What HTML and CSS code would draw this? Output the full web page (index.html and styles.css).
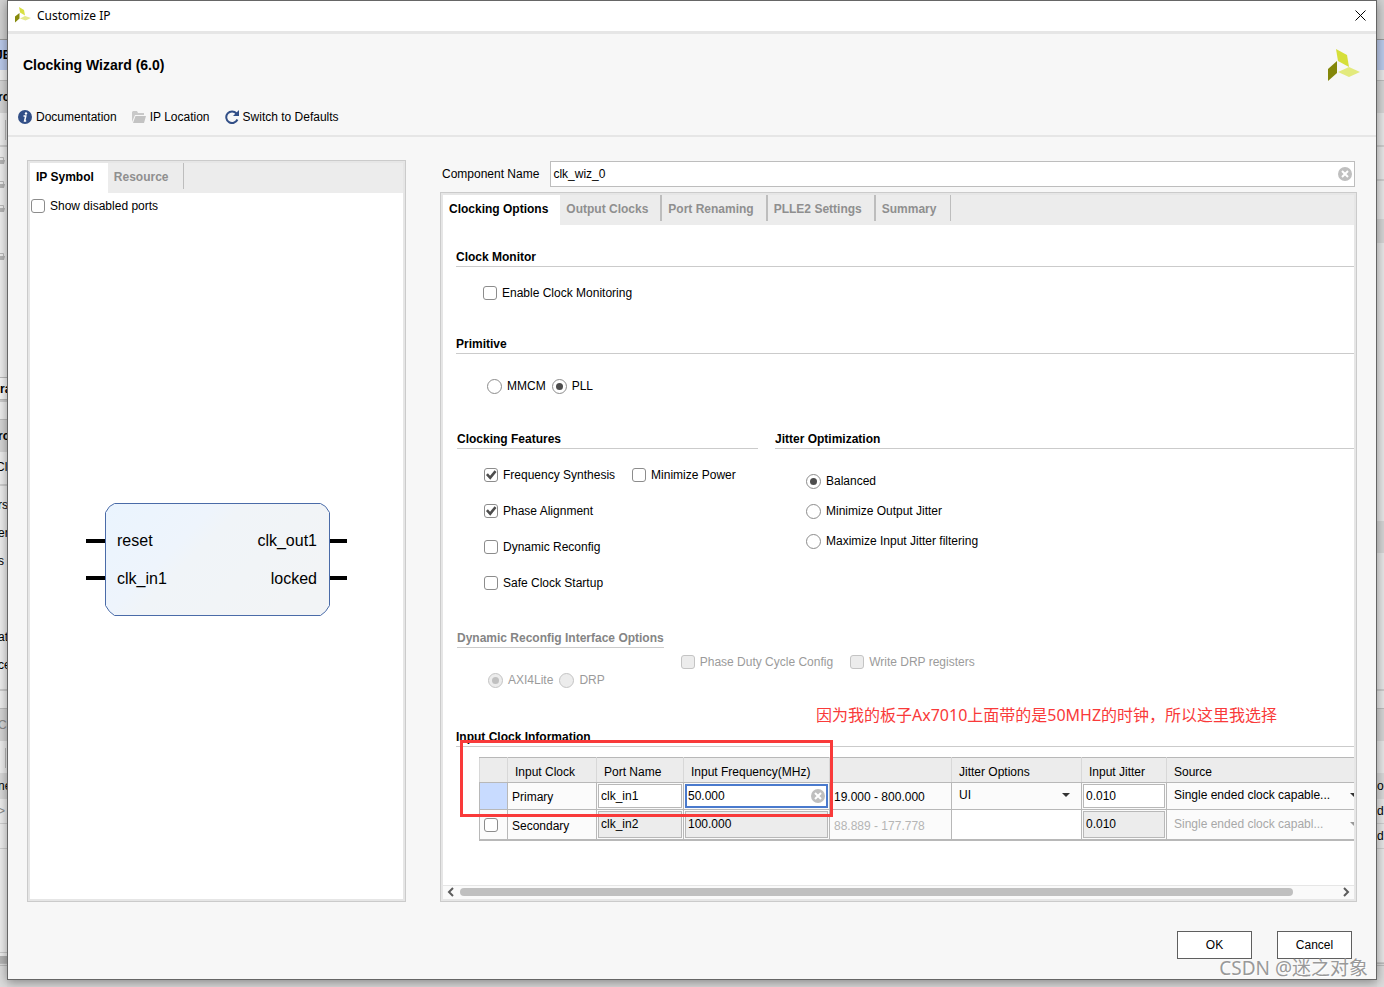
FILE: index.html
```html
<!DOCTYPE html>
<html lang="en">
<head>
    <meta charset="UTF-8">
    <meta name="viewport" content="width=device-width, initial-scale=1.0">
    <title>Customize IP</title>
    <link rel="stylesheet" href="styles.css">
</head>
<body>

<div class="desktop">
    <!-- main window, left edge -->
    <div class="edge left">
        <div class="edge-menu"></div>
        <div class="edge-banner"><b>JE</b></div>
        <div class="edge-gap"></div>
        <div class="edge-title"><b>rc</b></div>
        <div class="edge-tools"><i></i></div>
        <div class="edge-files">
            <svg width="5" height="8" viewBox="0 0 5 8"><path d="M0 1.500h3.500V4" fill="none" stroke="#bbb"/><path d="M0 4h5l-1 4H0z" fill="#b5b5b5"/></svg>
            <svg width="5" height="8" viewBox="0 0 5 8"><path d="M0 1.500h3.500V4" fill="none" stroke="#bbb"/><path d="M0 4h5l-1 4H0z" fill="#b5b5b5"/></svg>
            <svg width="5" height="8" viewBox="0 0 5 8"><path d="M0 1.500h3.500V4" fill="none" stroke="#bbb"/><path d="M0 4h5l-1 4H0z" fill="#b5b5b5"/></svg>
            <svg class="skip" width="5" height="8" viewBox="0 0 5 8"><path d="M0 1.500h3.500V4" fill="none" stroke="#bbb"/><path d="M0 4h5l-1 4H0z" fill="#b5b5b5"/></svg>
        </div>
        <div class="edge-tab"><b>ra</b></div>
        <div class="edge-split"></div>
        <div class="edge-title"><b>rc</b></div>
        <div class="edge-tools">Clo</div>
        <div class="edge-props">
            <span>rs</span>
            <span>er</span>
            <span>s</span>
            <span class="skip">at</span>
            <span>ce</span>
        </div>
        <div class="edge-split"></div>
        <div class="edge-title muted">Co</div>
        <div class="edge-tools plain"><i></i></div>
        <div class="edge-head">ne</div>
        <div class="edge-row muted">&gt;</div>
        <div class="edge-row"></div>
        <div class="edge-rest"></div>
        <div class="edge-scroll"></div>
        <div class="edge-status"></div>
    </div>

    <main class="dialog">
        <header class="titlebar">
            <svg class="title-icon" width="16" height="16" viewBox="0 0 32 32">
                <path d="M8 0l10 6 2 11-10-6z" fill="#d8e043"/>
                <path d="M0 19l9-7v11l-9 8z" fill="#878a0b"/>
                <path d="M10 23l10-5 12 4-11 5z" fill="#e4e98a"/>
            </svg>
            <span class="title-text">Customize IP</span>
            <button class="close" aria-label="Close">
                <svg width="11" height="11" viewBox="0 0 11 11"><path d="M.5.5l10 10M10.500.5l-10 10" stroke="#000" fill="none"/></svg>
            </button>
        </header>

        <section class="ip-header">
            <div class="ip-name">
                <h1>Clocking Wizard (6.0)</h1>
                <svg width="32" height="32" viewBox="0 0 32 32">
                    <path d="M8 0l11 6 2 12-11-6z" fill="#d6df3a"/>
                    <path d="M0 20l9-8v12l-9 8z" fill="#84870a"/>
                    <path d="M10 23l11-5 11 5-11 5z" fill="#e3ea7d"/>
                </svg>
            </div>
            <nav class="actions">
                <a href="#">
                    <svg width="14" height="14" viewBox="0 0 14 14">
                        <circle cx="7" cy="7" r="7" fill="#324f87"/>
                        <circle cx="8" cy="3.500" r="1.200" fill="#fff"/>
                        <path d="M5.500 6h2.300l-1.200 5h1.600" fill="none" stroke="#fff" stroke-width="1.500"/>
                    </svg>
                    Documentation
                </a>
                <a href="#">
                    <svg width="14" height="12" viewBox="0 0 14 12">
                        <path d="M0 11V1l1-1h4l1 2h6v2H3z" fill="#c9c9c9"/>
                        <path d="M3.500 5H14l-2 7H1z" fill="#c3c3c3"/>
                    </svg>
                    IP Location
                </a>
                <a href="#">
                    <svg width="14" height="14" viewBox="0 0 14 14">
                        <path d="M11.500 3.500A5.800 5.800 0 1 0 12.400 9.500" fill="none" stroke="#324f87" stroke-width="2"/>
                        <path d="M14 0v6H8z" fill="#324f87"/>
                    </svg>
                    Switch to Defaults
                </a>
            </nav>
        </section>

        <div class="content">
            <section class="panel symbol-panel">
                <div class="tabs">
                    <button class="tab active">IP Symbol</button>
                    <button class="tab">Resource</button>
                </div>
                <label class="option show-ports"><input type="checkbox"> Show disabled ports</label>
                <div class="symbol">
                    <svg width="261" height="113" viewBox="0 0 261 113">
                        <defs>
                            <linearGradient id="blockFill" x1="0" y1="0" x2="1" y2="0.500">
                                <stop offset="0" stop-color="#eaf4fe"/>
                                <stop offset="0.400" stop-color="#eef4fc"/>
                                <stop offset="0.500" stop-color="#f0f4f8"/>
                                <stop offset="1" stop-color="#f2f4f6"/>
                            </linearGradient>
                        </defs>
                        <path d="M0 38h20M0 75h20M243 38h18M243 75h18" stroke="#000" stroke-width="4"/>
                        <path d="M28.500.5h206l5 3 4 6v93l-4 6-5 4h-206l-5-4-4-6v-93l4-6z" fill="url(#blockFill)" stroke="#4a6ba8"/>
                        <g class="port-text">
                            <text x="31" y="43">reset</text>
                            <text x="31" y="81">clk_in1</text>
                            <text x="231" y="43" text-anchor="end">clk_out1</text>
                            <text x="231" y="81" text-anchor="end">locked</text>
                        </g>
                    </svg>
                </div>
            </section>

            <section class="config">
                <div class="component">
                    <label for="componentName">Component Name</label>
                    <div class="field">
                        <input type="text" id="componentName" value="clk_wiz_0">
                        <button class="clear" aria-label="Clear">
                            <svg width="14" height="14" viewBox="0 0 14 14"><circle cx="7" cy="7" r="7" fill="#bfbfbf"/><path d="M4 4l6 6M10 4l-6 6" stroke="#fff" stroke-width="2"/></svg>
                        </button>
                    </div>
                </div>

                <div class="panel config-panel">
                    <div class="tabs">
                        <button class="tab active">Clocking Options</button>
                        <button class="tab">Output Clocks</button>
                        <button class="tab">Port Renaming</button>
                        <button class="tab">PLLE2 Settings</button>
                        <button class="tab">Summary</button>
                    </div>

                    <div class="options">
                        <h2>Clock Monitor</h2>
                        <div class="monitor">
                            <label class="option"><input type="checkbox"> Enable Clock Monitoring</label>
                        </div>

                        <h2>Primitive</h2>
                        <div class="primitive">
                            <label class="option"><input type="radio" name="primitive"> MMCM</label>
                            <label class="option"><input type="radio" name="primitive" checked> PLL</label>
                        </div>

                        <div class="columns">
                            <div class="features">
                                <h2>Clocking Features</h2>
                                <div class="feature-list">
                                    <div class="feature-row">
                                        <label class="option"><input type="checkbox" checked> Frequency Synthesis</label>
                                        <label class="option"><input type="checkbox"> Minimize Power</label>
                                    </div>
                                    <label class="option"><input type="checkbox" checked> Phase Alignment</label>
                                    <label class="option"><input type="checkbox"> Dynamic Reconfig</label>
                                    <label class="option"><input type="checkbox"> Safe Clock Startup</label>
                                </div>
                            </div>
                            <div class="jitter">
                                <h2>Jitter Optimization</h2>
                                <div class="jitter-list">
                                    <label class="option"><input type="radio" name="jitter" checked> Balanced</label>
                                    <label class="option"><input type="radio" name="jitter"> Minimize Output Jitter</label>
                                    <label class="option"><input type="radio" name="jitter"> Maximize Input Jitter filtering</label>
                                </div>
                            </div>
                        </div>

                        <div class="reconfig">
                            <div>
                                <h2>Dynamic Reconfig Interface Options</h2>
                                <div class="reconfig-type">
                                    <label class="option"><input type="radio" name="reconfig" checked disabled> AXI4Lite</label>
                                    <label class="option"><input type="radio" name="reconfig" disabled> DRP</label>
                                </div>
                            </div>
                            <div class="reconfig-flags">
                                <label class="option"><input type="checkbox" disabled> Phase Duty Cycle Config</label>
                                <label class="option"><input type="checkbox" disabled> Write DRP registers</label>
                            </div>
                        </div>

                        <div class="clock-info">
                            <h2>Input Clock Information</h2>
                            <div class="table-wrap">
                                <table>
                                    <colgroup>
                                        <col class="c-mark"><col class="c-clock"><col class="c-port"><col class="c-freq">
                                        <col class="c-range"><col class="c-options"><col class="c-jitter"><col class="c-source">
                                    </colgroup>
                                    <thead>
                                        <tr>
                                            <th></th>
                                            <th>Input Clock</th>
                                            <th>Port Name</th>
                                            <th>Input Frequency(MHz)</th>
                                            <th></th>
                                            <th>Jitter Options</th>
                                            <th>Input Jitter</th>
                                            <th>Source</th>
                                        </tr>
                                    </thead>
                                    <tbody>
                                        <tr>
                                            <td class="selected"></td>
                                            <td class="text">Primary</td>
                                            <td><input type="text" value="clk_in1" aria-label="Primary port name"></td>
                                            <td>
                                                <div class="freq">
                                                    <input type="text" class="focused" value="50.000" aria-label="Primary input frequency">
                                                    <button class="clear" aria-label="Clear">
                                                        <svg width="14" height="14" viewBox="0 0 14 14"><circle cx="7" cy="7" r="7" fill="#bfbfbf"/><path d="M4 4l6 6M10 4l-6 6" stroke="#fff" stroke-width="2"/></svg>
                                                    </button>
                                                </div>
                                            </td>
                                            <td class="range">19.000 - 800.000</td>
                                            <td><div class="pick"><select aria-label="Jitter options"><option>UI</option></select></div></td>
                                            <td><input type="text" value="0.010" aria-label="Primary input jitter"></td>
                                            <td><div class="pick"><select aria-label="Primary source"><option>Single ended clock capable...</option></select></div></td>
                                        </tr>
                                        <tr class="secondary">
                                            <td class="mark"><input type="checkbox" aria-label="Enable secondary clock"></td>
                                            <td class="text">Secondary</td>
                                            <td><input type="text" value="clk_in2" aria-label="Secondary port name" disabled></td>
                                            <td><input type="text" value="100.000" aria-label="Secondary input frequency" disabled></td>
                                            <td class="range">88.889 - 177.778</td>
                                            <td class="blank"></td>
                                            <td><input type="text" value="0.010" aria-label="Secondary input jitter" disabled></td>
                                            <td><div class="pick"><select aria-label="Secondary source" disabled><option>Single ended clock capabl...</option></select></div></td>
                                        </tr>
                                    </tbody>
                                </table>
                            </div>
                            <div class="highlight"></div>
                            <p class="note" lang="zh">因为我的板子Ax7010上面带的是50MHZ的时钟，所以这里我选择</p>
                        </div>
                    </div>

                    <div class="scrollbar">
                        <button aria-label="Scroll left"><svg width="7" height="10" viewBox="0 0 7 10"><path d="M6 1L2 5l4 4" fill="none" stroke="#5c5c5c" stroke-width="2"/></svg></button>
                        <div class="track"><div class="thumb"></div></div>
                        <button aria-label="Scroll right"><svg width="7" height="10" viewBox="0 0 7 10"><path d="M1 1l4 4-4 4" fill="none" stroke="#5c5c5c" stroke-width="2"/></svg></button>
                    </div>
                </div>
            </section>
        </div>

        <footer class="buttons">
            <button>OK</button>
            <button>Cancel</button>
        </footer>
    </main>

    <!-- main window, right edge -->
    <div class="edge right">
        <div class="edge-menu"></div>
        <div class="edge-banner"></div>
        <div class="edge-gap"></div>
        <div class="edge-title"></div>
        <div class="edge-tools"></div>
        <div class="edge-tools"></div>
        <div class="edge-canvas"></div>
        <div class="edge-shade"></div>
        <div class="edge-view"></div>
        <div class="edge-shade tall"></div>
        <div class="edge-below"></div>
        <div class="edge-split"></div>
        <div class="edge-title"></div>
        <div class="edge-tools plain"></div>
        <div class="edge-head">oo</div>
        <div class="edge-row">d</div>
        <div class="edge-row">d</div>
        <div class="edge-rest"></div>
        <div class="edge-status"></div>
    </div>

    <div class="watermark" lang="zh">CSDN @迷之对象</div>
</div>

</body>
</html>
```
FILE: styles.css
```css
* {
    box-sizing: border-box;
}

body {
    margin: 0;
    font-family: "Liberation Sans", Arial, sans-serif;
    font-size: 12px;
    line-height: 16px;
    color: #000;
    background: #d9d9d9;
}

button, input, select {
    font: inherit;
    color: inherit;
    margin: 0;
    padding: 0;
    border: none;
    border-radius: 0;
    background: none;
}

svg {
    display: block;
    flex: none;
}

h1, h2, p {
    margin: 0;
}

.desktop {
    position: relative;
    display: grid;
    grid-template-columns: 7px minmax(0, 1fr) 7px;
    min-height: 100vh;
}

/* main window behind the dialog */
.edge {
    display: flex;
    flex-direction: column;
    overflow: hidden;
    white-space: nowrap;
    background: #efefef;
}

.edge.left {
    text-indent: -2px;
}

.edge.right {
    background: #e8e8e8;
}

.edge > div {
    flex: none;
    overflow: hidden;
}

.edge b {
    text-indent: 0;
}

.edge-menu {
    height: 39px;
    background: #d2d2d2;
}

.edge-banner {
    height: 31px;
    padding-top: 7px;
    border-top: 1px solid #999;
    background: #bccbec;
    text-indent: -4px;
}

.edge-gap {
    height: 10px;
}

.edge-title {
    height: 33px;
    padding-top: 8px;
    border-top: 1px solid #bdbdbd;
    background: #d6d6d6;
}

.edge-tools {
    height: 34px;
    padding-top: 7px;
    border-bottom: 2px solid #cfcfcf;
    text-indent: -4px;
}

.edge-tools.plain {
    height: 32px;
    border: none;
}

.edge-tools i {
    display: block;
    width: 1px;
    height: 20px;
    margin-left: 5px;
    background: #bbb;
}

.edge-files {
    display: flex;
    flex-direction: column;
    gap: 16px;
    height: 231px;
    padding-top: 9px;
    border-bottom: 1px solid #bbb;
}

.edge-files .skip {
    margin-top: 24px;
}

.edge-tab {
    height: 22px;
    padding-top: 3px;
    border-bottom: 1px solid #bbb;
    background: #f7f7f7;
    text-indent: 0;
}

.edge-split {
    height: 19px;
    border-top: 2px solid #ccc;
}

.edge-props {
    display: flex;
    flex-direction: column;
    gap: 12px;
    height: 203px;
    padding-top: 11px;
}

.edge-props .skip {
    margin-top: 48px;
}

.edge-head {
    height: 26px;
    padding-top: 5px;
    background: #dadada;
}

.edge-row {
    height: 25px;
    padding-top: 4px;
    border-bottom: 1px solid #d0d0d0;
}

.edge > .edge-rest {
    flex: 1;
    border-bottom: 1px solid #ccc;
}

.edge-scroll {
    height: 10px;
    border-top: 3px solid #efefef;
    background: #b4b4b4;
}

.edge-status {
    height: 24px;
    border-top: 3px double #bbb;
    background: #dcdcdc;
}

.edge-canvas {
    height: 38px;
}

.edge-shade {
    height: 24px;
    background: #d6d6d6;
}

.edge-shade.tall {
    height: 32px;
}

.edge-view {
    height: 278px;
}

.edge-below {
    height: 136px;
}

.muted {
    color: #8a8a8a;
}

/* dialog */
.dialog {
    position: relative;
    display: flex;
    flex-direction: column;
    margin-bottom: 7px;
    border: 1px solid #666;
    background: #f7f7f7;
    box-shadow: 0 2px 10px rgba(0, 0, 0, 0.4);
}

.titlebar {
    display: flex;
    align-items: center;
    height: 33px;
    padding: 0 10px 2px 7px;
    border-bottom: 3px solid #e6e6e6;
    background: #fff;
}

.title-text {
    flex: 1;
    margin-left: 6px;
    padding-top: 2px;
    font-family: "Noto Sans", "Open Sans", sans-serif;
}

.ip-header {
    height: 103px;
    padding: 15px 16px 0 10px;
    border-bottom: 2px solid #e6e6e6;
}

.ip-name {
    display: flex;
    justify-content: space-between;
    align-items: center;
    padding-left: 5px;
}

h1 {
    font-size: 14px;
    line-height: 16px;
}

.actions {
    display: flex;
    gap: 15px;
    margin-top: 28px;
}

.actions a {
    display: flex;
    align-items: center;
    gap: 4px;
    color: inherit;
    text-decoration: none;
}

.content {
    flex: 1;
    display: flex;
    gap: 34px;
    padding: 23px 19px 0;
}

.panel {
    display: flex;
    flex-direction: column;
    border: 1px solid #cbcbcb;
    background: #fff;
    box-shadow: inset 0 0 0 2px #e6e6e6;
    padding: 2px;
}

.symbol-panel {
    flex: 0 0 379px;
}

.tabs {
    display: flex;
    height: 30px;
    background: #ececec;
}

.tab {
    height: 26px;
    padding: 2px 14px 0 6px;
    border-right: 1px solid #bdbdbd;
    font-weight: bold;
    color: #8f8f8f;
}

.tab.active {
    height: 30px;
    padding-bottom: 4px;
    border-right: none;
    background: #fff;
    color: #000;
}

.config-panel .tab {
    padding-right: 12px;
    border-right-width: 2px;
}

.config-panel .tab:last-child {
    padding-right: 14px;
    border-right-width: 1px;
}

/* tick boxes and radios */
.option {
    display: flex;
    align-items: center;
    gap: 5px;
    height: 16px;
    white-space: nowrap;
}

input[type="checkbox"],
input[type="radio"] {
    appearance: none;
    flex: none;
    width: 14px;
    height: 14px;
    border: 1px solid #8c8c8c;
    border-radius: 3px;
    background: #fff;
}

input[type="radio"] {
    display: grid;
    place-content: center;
    width: 15px;
    height: 15px;
    border-radius: 50%;
}

input[type="checkbox"]:checked::before {
    content: "";
    display: block;
    width: 12px;
    height: 12px;
    background: #4d4d4d;
    clip-path: polygon(8% 50%, 24% 36%, 42% 56%, 80% 10%, 96% 24%, 44% 90%);
}

input[type="radio"]:checked::before {
    content: "";
    width: 7px;
    height: 7px;
    border-radius: 50%;
    background: #4d4d4d;
}

input[type="checkbox"]:disabled,
input[type="radio"]:disabled {
    border-color: #c4c4c4;
    background: #ececec;
}

input[type="radio"]:disabled::before {
    background: #c0c0c0;
}

.show-ports {
    height: 26px;
    padding-left: 1px;
}

.symbol {
    flex: 1;
    display: flex;
    align-items: center;
    justify-content: center;
}

.port-text {
    font-size: 16px;
}

/* right side */
.config {
    flex: 1;
    min-width: 0;
    display: flex;
    flex-direction: column;
}

.component {
    display: flex;
    align-items: center;
    gap: 11px;
    margin: 1px 2px 5px;
}

.field {
    flex: 1;
    display: flex;
    align-items: center;
    height: 26px;
    padding: 0 2px;
    border: 1px solid #bdbdbd;
    background: #fff;
}

.field input {
    flex: 1;
    min-width: 0;
    outline: none;
}

.config-panel {
    flex: 1;
    min-width: 0;
}

.options {
    flex: 1;
    padding: 24px 0 44px 13px;
}

h2 {
    border-bottom: 1px solid #cbcbcb;
    font-size: 12px;
    line-height: 17px;
}

.monitor {
    padding: 18px 0 35px 27px;
}

.primitive {
    display: flex;
    gap: 6px;
    padding: 24px 0 37px 31px;
}

.columns {
    display: flex;
    gap: 17px;
    padding-left: 1px;
}

.features {
    flex: 0 0 301px;
}

.feature-list {
    display: flex;
    flex-direction: column;
    gap: 20px;
    padding: 18px 0 39px 27px;
}

.feature-row {
    display: flex;
    gap: 17px;
}

.jitter {
    flex: 1;
}

.jitter-list {
    display: flex;
    flex-direction: column;
    gap: 14px;
    padding: 24px 0 0 31px;
}

.reconfig {
    display: flex;
    gap: 17px;
    padding-left: 1px;
    color: #9b9b9b;
}

.reconfig h2 {
    color: #858585;
}

.reconfig-type {
    display: flex;
    gap: 6px;
    padding: 24px 0 41px 31px;
}

.reconfig-flags {
    display: flex;
    gap: 17px;
    padding-top: 24px;
}

/* input clock table */
.clock-info {
    position: relative;
}

.table-wrap {
    overflow: hidden;
    margin: 10px 0 0 23px;
}

table {
    width: 920px;
    table-layout: fixed;
    border-collapse: collapse;
    border: 1px solid #b8b8b8;
    border-bottom-width: 2px;
}

.c-mark { width: 28px; }
.c-clock { width: 89px; }
.c-port { width: 87px; }
.c-freq { width: 146px; }
.c-range { width: 122px; }
.c-options { width: 130px; }
.c-jitter { width: 85px; }
.c-source { width: auto; }

th {
    height: 25px;
    padding: 3px 0 0 7px;
    border: 1px solid #d8d8d8;
    border-top-color: #b8b8b8;
    border-bottom-color: #b8b8b8;
    background: #ececec;
    font-weight: normal;
    text-align: left;
}

td {
    height: 27px;
    padding: 1px;
    border: 1px solid #b8b8b8;
    background: #fbfbfb;
}

.secondary td {
    height: 30px;
}

td.text,
td.range {
    padding: 2px 0 0 4px;
}

td.selected {
    background: #c8dbff;
}

td.blank {
    background: #fff;
}

td.mark {
    padding: 0 0 0 4px;
}

.mark input {
    display: block;
}

td input[type="text"] {
    display: block;
    width: 100%;
    height: 24px;
    padding: 0 2px;
    border: 1px solid #b8b8b8;
    background: #fff;
}

.secondary td input[type="text"] {
    height: 27px;
    padding-bottom: 2px;
    background: #ececec;
    color: #000;
}

.freq {
    position: relative;
}

td input[type="text"].focused {
    padding: 0 1px;
    border: 2px solid #4a7acd;
}

.freq .clear {
    position: absolute;
    top: 5px;
    right: 3px;
}

.secondary .range {
    color: #b5b5b5;
}

.pick {
    position: relative;
}

.pick select {
    display: block;
    appearance: none;
    width: 100%;
    height: 22px;
    padding: 0 0 2px 6px;
    opacity: 1;
}

.pick select:disabled {
    color: #a8a8a8;
}

.pick::after {
    content: "";
    position: absolute;
    top: 8px;
    right: 10px;
    border: 4px solid transparent;
    border-top-color: #333;
    border-bottom: none;
}

td:last-child .pick {
    width: 192px;
}

td:last-child .pick::after {
    right: 2px;
}

.secondary .pick::after {
    border-top-color: #999;
}

.highlight {
    position: absolute;
    top: 11px;
    left: 4px;
    width: 373px;
    height: 77px;
    border: 3px solid #f93a3a;
}

.note {
    position: absolute;
    top: -25px;
    left: 360px;
    font-family: "Noto Sans", "Noto Sans CJK SC", sans-serif;
    font-size: 16px;
    line-height: 22px;
    color: #f93a3a;
    white-space: nowrap;
}

.scrollbar {
    display: flex;
    align-items: center;
    gap: 6px;
    height: 14px;
    padding: 0 4px 1px;
    border-top: 1px solid #e6e6e6;
    background: #fafafa;
}

.track {
    flex: 1;
}

.thumb {
    width: 95%;
    height: 8px;
    border-radius: 4px;
    background: #c0c0c0;
}

.buttons {
    display: flex;
    justify-content: flex-end;
    gap: 25px;
    padding: 29px 24px 20px;
}

.buttons button {
    width: 75px;
    height: 28px;
    border: 1px solid #5f5f5f;
    background: #fff;
}

.watermark {
    position: absolute;
    right: 16px;
    bottom: 6px;
    font-family: "Noto Sans", "Noto Sans CJK SC", sans-serif;
    font-size: 19px;
    line-height: 26px;
    color: #999;
    text-shadow: 1px 1px 0 #fff;
}
```
